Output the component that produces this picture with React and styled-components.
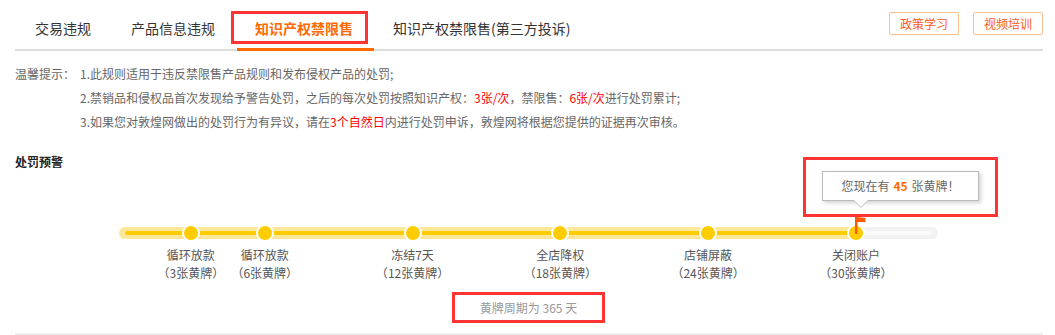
import React from 'react';
import styled, { createGlobalStyle } from 'styled-components';

const GlobalStyle = createGlobalStyle`
    body {
        margin: 0;
        background: #fff;
        font-family: "Noto Sans CJK SC", "Microsoft YaHei", sans-serif;
        color: #333;
    }
`;

const Page = styled.div`
    width: 1028px;
    padding: 8px 12px 0 15px;
`;

const TabBar = styled.div`
    display: flex;
    align-items: flex-start;
    height: 41px;
    border-bottom: 2px solid #ddd;
`;

const Tab = styled.div`
    position: relative;
    height: 41px;
    line-height: 40px;
    padding: 0 20px;
    font-size: 14px;
    font-weight: ${p => (p.$active ? 'bold' : 'normal')};
    color: ${p => (p.$active ? '#ff6a00' : '#333')};
    cursor: pointer;
    &::after {
        content: '';
        display: ${p => (p.$active ? 'block' : 'none')};
        position: absolute;
        left: 2px;
        right: -1px;
        bottom: -2px;
        height: 3px;
        background: #ff6a00;
    }
`;

const Mark = styled.div`
    position: absolute;
    border: 3px solid #f33;
    pointer-events: none;
`;

const TabMark = styled(Mark)`
    left: -4px;
    top: 3px;
    width: 131px;
    height: 27px;
`;

const Tools = styled.div`
    margin-left: auto;
    display: flex;
    gap: 14px;
    padding-top: 4px;
`;

const ToolButton = styled.button`
    width: 70px;
    height: 23px;
    padding: 0;
    border: 1px solid #ffc08c;
    border-radius: 2px;
    background: #fff;
    color: #ff5a1a;
    font-family: inherit;
    font-size: 12px;
    line-height: 21px;
    cursor: pointer;
`;

const Tips = styled.div`
    display: grid;
    grid-template-columns: 65px 1fr;
    margin-top: 11px;
    font-size: 12px;
    line-height: 24px;
    color: #666;
`;

const TipLabel = styled.div`
    grid-row: span 3;
`;

const Red = styled.span`
    color: #f00;
`;

const SectionTitle = styled.div`
    margin-top: 18px;
    font-size: 12px;
    font-weight: bold;
    line-height: 20px;
    color: #222;
`;

const Progress = styled.div`
    position: relative;
    width: 819px;
    margin-left: 104px;
    padding-top: 55px;
    padding-bottom: 53px;
`;

const Rail = styled.div`
    position: relative;
    height: 12px;
    border-radius: 6px;
    background: #f2f2f2;
    &::before {
        content: '';
        position: absolute;
        left: 6px;
        right: 6px;
        top: 4px;
        height: 4px;
        border-radius: 2px;
        background: #fafafa;
    }
`;

const RailFill = styled.div`
    position: absolute;
    left: 0;
    top: 0;
    bottom: 0;
    border-radius: 6px 0 0 6px;
    background: #ffe79a;
    &::before {
        content: '';
        position: absolute;
        left: 6px;
        right: 0;
        top: 4px;
        height: 4px;
        border-radius: 2px 0 0 2px;
        background: #ffcc00;
    }
`;

const Stop = styled.div`
    position: absolute;
    top: 0;
    width: 0;
    height: 12px;
`;

const Dot = styled.div`
    position: absolute;
    left: -9px;
    top: -3px;
    width: 14px;
    height: 14px;
    border: 2px solid #fff;
    border-radius: 50%;
    background: #ffcc00;
`;

const StopLabel = styled.div`
    position: absolute;
    top: 19px;
    left: 0;
    transform: translateX(-50%);
    font-size: 12px;
    line-height: 18px;
    color: #555;
    text-align: center;
    white-space: nowrap;
`;

const Flag = styled.svg`
    position: absolute;
    left: -1px;
    top: -10px;
`;

const TipMark = styled(Mark)`
    left: 684px;
    top: -15px;
    width: 189px;
    height: 54px;
    display: flex;
    align-items: center;
    justify-content: center;
`;

const Bubble = styled.div`
    position: relative;
    width: 155px;
    height: 28px;
    margin-top: -2px;
    border: 1px solid #bbb;
    background: #fff;
    box-shadow: 2px 2px 4px rgba(0, 0, 0, 0.18);
    font-size: 12px;
    line-height: 28px;
    color: #666;
    text-align: center;
    &::before,
    &::after {
        content: '';
        position: absolute;
        left: 30px;
        width: 0;
        height: 0;
        border-style: solid;
    }
    &::before {
        bottom: -8px;
        border-width: 8px 8px 0 8px;
        border-color: #bbb transparent transparent transparent;
    }
    &::after {
        bottom: -7px;
        left: 31px;
        border-width: 7px 7px 0 7px;
        border-color: #fff transparent transparent transparent;
    }
`;

const Count = styled.b`
    color: #ff6a00;
    margin: 0 4px;
`;

const CycleRow = styled.div`
    width: 819px;
    margin-left: 104px;
    display: flex;
    justify-content: center;
`;

const CycleBox = styled.div`
    width: 147px;
    height: 25px;
    border: 3px solid #f33;
    font-size: 12px;
    line-height: 25px;
    color: #999;
    text-align: center;
`;

const BottomLine = styled.div`
    margin-top: 10px;
    height: 2px;
    background: #eee;
`;

const tabs = ['交易违规', '产品信息违规', '知识产权禁限售', '知识产权禁限售(第三方投诉)'];

const stops = [
    { cards: 3, name: '循环放款' },
    { cards: 6, name: '循环放款' },
    { cards: 12, name: '冻结7天' },
    { cards: 18, name: '全店降权' },
    { cards: 24, name: '店铺屏蔽' },
    { cards: 30, name: '关闭账户' },
];

const MAX_CARDS = 30;
const cardX = n => n * 24.63 - 2;
const current = 45;
const reached = cardX(Math.min(current, MAX_CARDS));

const App = () => {
    return (
        <Page>
            <GlobalStyle />
            <TabBar>
                {tabs.map((t, i) => (
                    <Tab key={t} $active={i === 2}>
                        {t}
                        {i === 2 && <TabMark />}
                    </Tab>
                ))}
                <Tools>
                    <ToolButton>政策学习</ToolButton>
                    <ToolButton>视频培训</ToolButton>
                </Tools>
            </TabBar>

            <Tips>
                <TipLabel>温馨提示：</TipLabel>
                <div>1.此规则适用于违反禁限售产品规则和发布侵权产品的处罚;</div>
                <div>
                    2.禁销品和侵权品首次发现给予警告处罚，之后的每次处罚按照知识产权：<Red>3张/次</Red>，禁限售：<Red>6张/次</Red>进行处罚累计;
                </div>
                <div>
                    3.如果您对敦煌网做出的处罚行为有异议，请在<Red>3个自然日</Red>内进行处罚申诉，敦煌网将根据您提供的证据再次审核。
                </div>
            </Tips>

            <SectionTitle>处罚预警</SectionTitle>

            <Progress>
                <TipMark>
                    <Bubble>
                        您现在有<Count>{current}</Count>张黄牌！
                    </Bubble>
                </TipMark>
                <Rail>
                    <RailFill style={{ width: reached }} />
                    {stops.map(s => (
                        <Stop key={s.cards} style={{ left: cardX(s.cards) }}>
                            <Dot />
                            <StopLabel>
                                {s.name}
                                <br />（{s.cards}张黄牌）
                            </StopLabel>
                            {s.cards === MAX_CARDS && (
                                <Flag width="14" height="18" viewBox="0 0 14 18">
                                    <rect x="0" y="0" width="2.5" height="17" fill="#ff5a00" />
                                    <path d="M2 0 L11 1 Q9 3 11 5 L2 5 Z" fill="#ff5a00" />
                                </Flag>
                            )}
                        </Stop>
                    ))}
                </Rail>
            </Progress>

            <CycleRow>
                <CycleBox>黄牌周期为 365 天</CycleBox>
            </CycleRow>
            <BottomLine />
        </Page>
    );
};

export default App;
